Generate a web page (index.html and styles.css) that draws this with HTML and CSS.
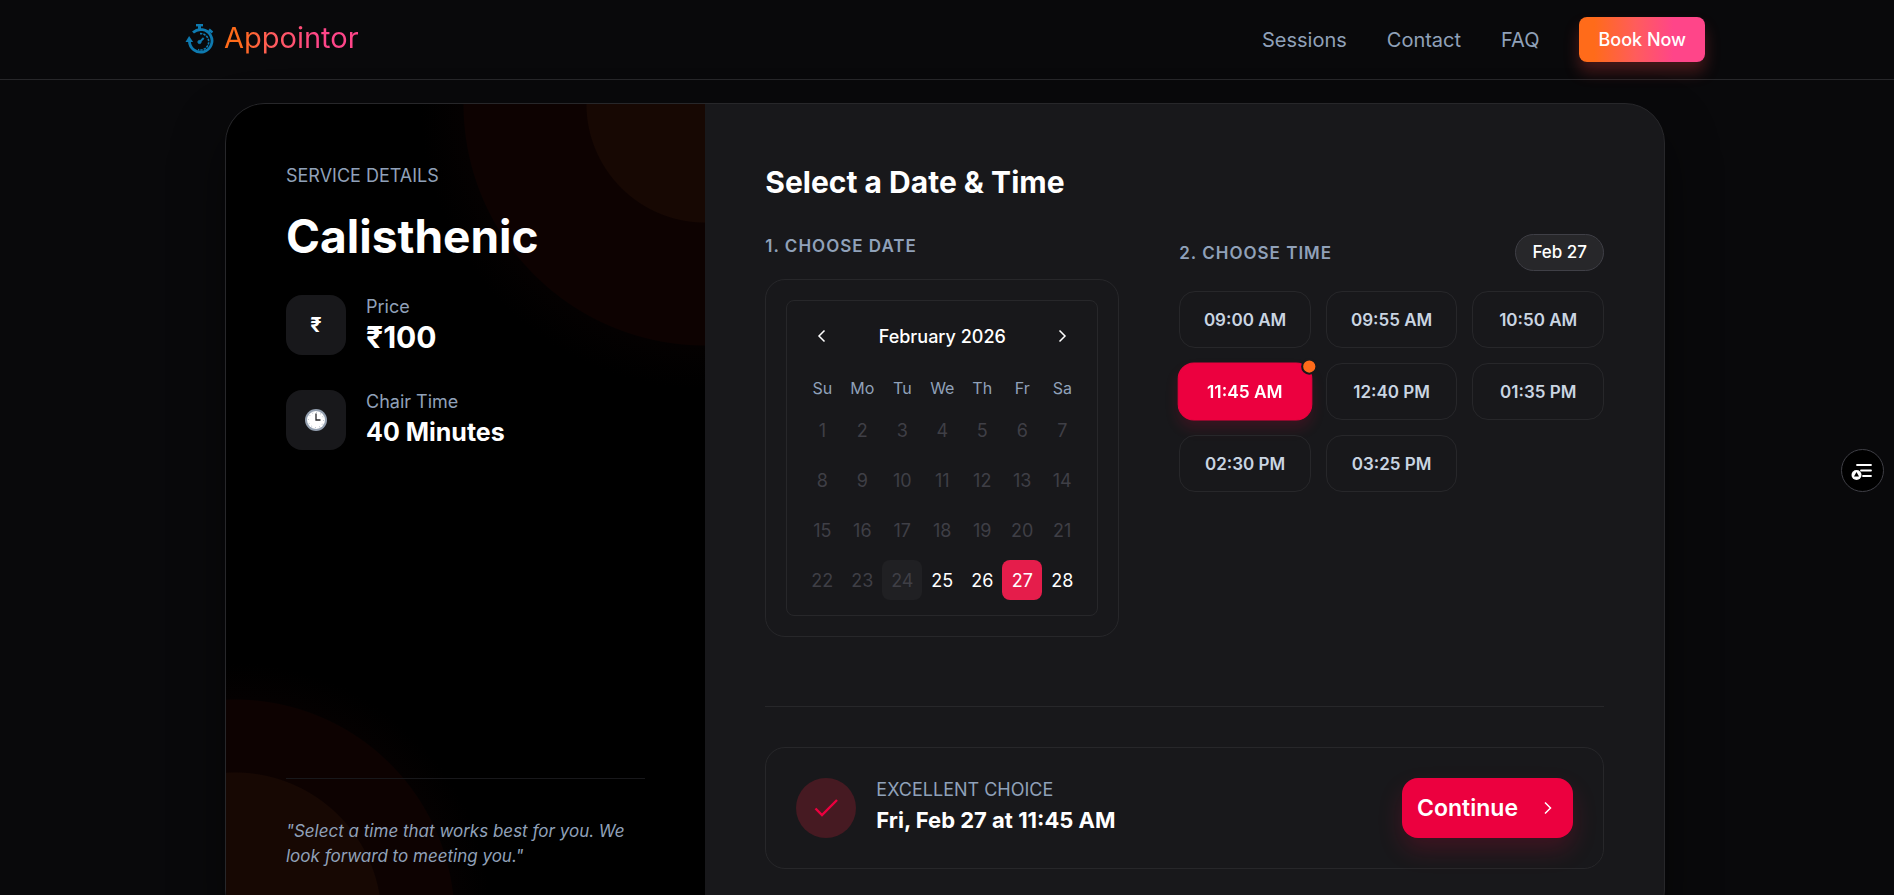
FILE: index.html
```html
<!DOCTYPE html>
<html lang="en">
<head>
    <meta charset="UTF-8">
    <meta name="viewport" content="width=device-width, initial-scale=1.0">
    <title>Appointor</title>
    <link rel="stylesheet" href="styles.css">
</head>
<body>
    <header class="header">
        <div class="header-inner">
            <a href="#" class="logo">
                <svg class="logo-icon" viewBox="0 0 28 31" fill="none" stroke="#0e7ab0">
                    <path d="M10.5 1.2h7" stroke-width="2.4"/>
                    <path d="M14 2v4" stroke-width="3"/>
                    <path d="M23.5 5.5l3.4 3" stroke-width="2.4"/>
                    <path d="M22.5 8.5l1.7-1.6" stroke-width="1.6"/>
                    <path d="M7.5 8.6A11.3 11.3 0 1 1 3.9 17" stroke-width="2.8"/>
                    <path d="M0 18l3.6-6 4 6z" fill="#0e7ab0" stroke="none"/>
                    <path d="M14.5 9.6a8.2 8.2 0 1 1-2 16" stroke-width="1.6" stroke-dasharray="2.4 1"/>
                    <path d="M13.8 18.4l4.4-4.4" stroke-width="2"/>
                    <circle cx="14" cy="18" r="1.6" fill="#0e7ab0"/>
                </svg>
                <span class="logo-text">Appointor</span>
            </a>
            <nav class="nav">
                <a href="#sessions">Sessions</a>
                <a href="#contact">Contact</a>
                <a href="#faq">FAQ</a>
                <button type="button" class="book-btn">Book Now</button>
            </nav>
        </div>
    </header>

    <main class="page">
        <div class="booking">
            <aside class="service">
                <div class="service-top">
                    <p class="label">SERVICE DETAILS</p>
                    <h1>Calisthenic</h1>
                    <div class="facts">
                        <div class="fact">
                            <div class="fact-icon">₹</div>
                            <div>
                                <p class="fact-label">Price</p>
                                <p class="fact-value price">₹100</p>
                            </div>
                        </div>
                        <div class="fact">
                            <div class="fact-icon">
                                <svg width="22" height="22" viewBox="0 0 22 22">
                                    <circle cx="11" cy="11" r="11" fill="#94a0b0"/>
                                    <circle cx="11" cy="11" r="9" fill="#fff"/>
                                    <circle cx="11" cy="11" r="7.6" fill="none" stroke="#9aa5b5" stroke-width="1" stroke-dasharray="0.8 3.18"/>
                                    <path d="M11 4.5V11h4.5" fill="none" stroke="#27272a" stroke-width="1.3"/>
                                </svg>
                            </div>
                            <div>
                                <p class="fact-label">Chair Time</p>
                                <p class="fact-value">40 Minutes</p>
                            </div>
                        </div>
                    </div>
                </div>
                <p class="quote">"Select a time that works best for you. We look forward to meeting you."</p>
            </aside>

            <section class="schedule">
                <h2>Select a Date &amp; Time</h2>
                <div class="pickers">
                    <div class="date-picker">
                        <h3>1. CHOOSE DATE</h3>
                        <div class="calendar-card">
                            <div class="calendar">
                                <div class="calendar-head">
                                    <button type="button" class="month-btn" aria-label="Previous month">
                                        <svg width="16" height="16" viewBox="0 0 16 16"><path d="M10.5 2.5L5 8l5.5 5.500"/></svg>
                                    </button>
                                    <span>February 2026</span>
                                    <button type="button" class="month-btn" aria-label="Next month">
                                        <svg width="16" height="16" viewBox="0 0 16 16"><path d="M5.500 2.500L11 8l-5.500 5.500"/></svg>
                                    </button>
                                </div>
                                <table>
                                    <thead>
                                        <tr><th>Su</th><th>Mo</th><th>Tu</th><th>We</th><th>Th</th><th>Fr</th><th>Sa</th></tr>
                                    </thead>
                                    <tbody>
                                        <tr>
                                            <td><button class="day" disabled>1</button></td>
                                            <td><button class="day" disabled>2</button></td>
                                            <td><button class="day" disabled>3</button></td>
                                            <td><button class="day" disabled>4</button></td>
                                            <td><button class="day" disabled>5</button></td>
                                            <td><button class="day" disabled>6</button></td>
                                            <td><button class="day" disabled>7</button></td>
                                        </tr>
                                        <tr>
                                            <td><button class="day" disabled>8</button></td>
                                            <td><button class="day" disabled>9</button></td>
                                            <td><button class="day" disabled>10</button></td>
                                            <td><button class="day" disabled>11</button></td>
                                            <td><button class="day" disabled>12</button></td>
                                            <td><button class="day" disabled>13</button></td>
                                            <td><button class="day" disabled>14</button></td>
                                        </tr>
                                        <tr>
                                            <td><button class="day" disabled>15</button></td>
                                            <td><button class="day" disabled>16</button></td>
                                            <td><button class="day" disabled>17</button></td>
                                            <td><button class="day" disabled>18</button></td>
                                            <td><button class="day" disabled>19</button></td>
                                            <td><button class="day" disabled>20</button></td>
                                            <td><button class="day" disabled>21</button></td>
                                        </tr>
                                        <tr>
                                            <td><button class="day" disabled>22</button></td>
                                            <td><button class="day" disabled>23</button></td>
                                            <td><button class="day today" disabled>24</button></td>
                                            <td><button class="day">25</button></td>
                                            <td><button class="day">26</button></td>
                                            <td><button class="day selected">27</button></td>
                                            <td><button class="day">28</button></td>
                                        </tr>
                                    </tbody>
                                </table>
                            </div>
                        </div>
                    </div>

                    <div class="time-picker">
                        <div class="time-head">
                            <h3>2. CHOOSE TIME</h3>
                            <span class="date-pill">Feb 27</span>
                        </div>
                        <div class="slots">
                            <button type="button" class="slot">09:00 AM</button>
                            <button type="button" class="slot">09:55 AM</button>
                            <button type="button" class="slot">10:50 AM</button>
                            <button type="button" class="slot selected">11:45 AM</button>
                            <button type="button" class="slot">12:40 PM</button>
                            <button type="button" class="slot">01:35 PM</button>
                            <button type="button" class="slot">02:30 PM</button>
                            <button type="button" class="slot">03:25 PM</button>
                        </div>
                    </div>
                </div>

                <div class="confirm">
                    <div class="summary">
                        <div class="check">
                            <svg width="28" height="28" viewBox="0 0 28 28"><path d="M3.500 14.500l6.500 6.500L25 6"/></svg>
                        </div>
                        <div class="summary-text">
                            <p class="label">EXCELLENT CHOICE</p>
                            <p class="chosen">Fri, Feb 27 at 11:45 AM</p>
                        </div>
                        <button type="button" class="continue-btn">
                            Continue
                            <svg width="20" height="20" viewBox="0 0 20 20"><path d="M7 4.500l5.500 5.500L7 15.500"/></svg>
                        </button>
                    </div>
                </div>
            </section>
        </div>
    </main>

    <button type="button" class="float-btn" aria-label="Open panel">
        <svg width="24" height="24" viewBox="0 0 24 24">
            <path d="M6 6h14M10 11.500h10M12 17h8" stroke="#fff" stroke-width="1.800" stroke-linecap="round"/>
            <circle cx="5.500" cy="16" r="5" fill="#fff"/>
            <path d="M5.500 13l2.500 4.500H3z" fill="#000"/>
        </svg>
    </button>
</body>
</html>
```
FILE: styles.css
```css
*,
*::after {
    box-sizing: border-box;
}

body {
    margin: 0;
    font-family: Inter, "Noto Sans", sans-serif;
    background-color: #09090b;
    color: #fff;
}

h1, h2, h3, p {
    margin: 0;
}

button {
    font-family: inherit;
    color: inherit;
    border: none;
    padding: 0;
    background: none;
    cursor: pointer;
}

svg {
    display: block;
}

/* header */
.header {
    border-bottom: 1px solid #27272a;
    padding-right: 4px;
}

.header-inner {
    max-width: 1536px;
    margin: 0 auto;
    padding: 17px 8px;
    display: flex;
    justify-content: space-between;
    align-items: center;
}

.logo {
    display: flex;
    align-items: center;
    gap: 10px;
    text-decoration: none;
}

.logo-icon {
    width: 29px;
    height: 31px;
}

.logo-text {
    padding-bottom: 4px;
    font-size: 29px;
    line-height: 36px;
    background: linear-gradient(90deg, #ff6b1a 12%, #ff5c5c 35%, #ff4589 70%);
    -webkit-background-clip: text;
    background-clip: text;
    color: transparent;
}

.nav {
    display: flex;
    align-items: center;
    gap: 40px;
}

.nav a {
    font-size: 20px;
    color: #90a1b9;
    text-decoration: none;
}

.book-btn {
    height: 45px;
    padding: 0 19px;
    border-radius: 8px;
    font-size: 18px;
    font-weight: 500;
    background: linear-gradient(90deg, #ff6b1a 12%, #ff5c5c 45%, #ff4589 75%);
    box-shadow: 0 10px 15px rgba(255, 70, 70, 0.25);
}

/* booking card */
.page {
    padding: 23px 4px 40px 0;
}

.booking {
    max-width: 1440px;
    margin: 0 auto;
    display: grid;
    grid-template-columns: 1fr 2fr;
    border: 1px solid #27272a;
    border-radius: 40px;
    overflow: hidden;
    background-color: #18181b;
    box-shadow: 0 25px 50px rgba(0, 0, 0, 0.5);
}

.service {
    padding: 60px;
    display: flex;
    flex-direction: column;
    justify-content: space-between;
    background:
        radial-gradient(circle at 100% 0, #170803 118px, #0d0201 119px, #0d0201 241px, #040101 242px, transparent 285px),
        radial-gradient(circle at 9px calc(100% - 10px), #170803 146px, #0d0201 147px, #0d0201 219px, #040101 220px, transparent 256px),
        #000;
}

.label {
    font-size: 18px;
    line-height: 24px;
    color: #90a1b9;
}

.service h1 {
    margin: 20px 0 30px;
    font-size: 46px;
    line-height: 57px;
    font-weight: 700;
}

.facts {
    display: flex;
    flex-direction: column;
    gap: 35px;
}

.fact {
    display: flex;
    align-items: center;
    gap: 20px;
}

.fact-icon {
    width: 60px;
    height: 60px;
    border-radius: 16px;
    display: flex;
    justify-content: center;
    align-items: center;
    font-size: 20px;
    font-weight: 700;
    background-color: #18181b;
}

.fact-label {
    font-size: 18px;
    line-height: 24px;
    color: #90a1b9;
}

.fact-value {
    font-size: 25px;
    line-height: 36px;
    font-weight: 700;
}

.fact-value.price {
    font-size: 30px;
}

.quote {
    padding-top: 40px;
    border-top: 1px solid #18181b;
    font-size: 17px;
    line-height: 25px;
    font-style: italic;
    color: #90a1b9;
}

/* date and time */
.schedule {
    padding: 60px;
}

h2 {
    margin-bottom: 34px;
    font-size: 30px;
    line-height: 36px;
    font-weight: 700;
}

h3 {
    font-size: 17px;
    line-height: 24px;
    font-weight: 600;
    letter-spacing: 1px;
    color: #90a1b9;
}

.pickers {
    display: grid;
    grid-template-columns: 5fr 6fr;
    gap: 60px;
    padding-bottom: 69px;
}

.calendar-card {
    margin-top: 21px;
    padding: 20px;
    border: 1px solid #27272a;
    border-radius: 20px;
}

.calendar {
    padding: 15px;
    border: 1px solid #27272a;
    border-radius: 8px;
}

.calendar-head {
    display: flex;
    justify-content: space-between;
    align-items: center;
    height: 40px;
    font-size: 18px;
    font-weight: 500;
}

.month-btn {
    width: 40px;
    height: 40px;
    display: flex;
    justify-content: center;
    align-items: center;
}

.month-btn svg,
.continue-btn svg {
    fill: none;
    stroke: #fff;
    stroke-width: 1.5;
}

table {
    width: 100%;
    margin-top: 20px;
    border-collapse: collapse;
    table-layout: fixed;
}

th {
    padding: 0;
    font-size: 16px;
    line-height: 24px;
    font-weight: 400;
    color: #90a1b9;
}

td {
    padding: 10px 0 0;
}

.day {
    display: block;
    width: 100%;
    height: 40px;
    border-radius: 8px;
    font-size: 18px;
}

.day:disabled {
    color: #3f3f46;
    cursor: default;
}

.day.today {
    background-color: #202023;
}

.day.selected {
    background-color: #e51d4b;
}

.time-head {
    display: flex;
    justify-content: space-between;
    align-items: center;
    margin-bottom: 20px;
}

.date-pill {
    padding: 0 16px;
    border: 1px solid #3f3f46;
    border-radius: 20px;
    font-size: 17px;
    line-height: 35px;
    font-weight: 500;
    background-color: #27272a;
}

.slots {
    display: grid;
    grid-template-columns: repeat(3, 1fr);
    gap: 15px;
}

.slot {
    position: relative;
    height: 57px;
    border: 1px solid #27272a;
    border-radius: 16px;
    font-size: 17px;
    font-weight: 600;
    color: #cad5e2;
}

.slot.selected {
    border-color: #ec003f;
    background-color: #ec003f;
    color: #fff;
    transform: scale(1.02);
    box-shadow: 0 8px 12px rgba(236, 0, 63, 0.15);
}

/* marker on the chosen slot */
.slot.selected::after {
    content: "";
    position: absolute;
    top: -5px;
    right: -6px;
    width: 16px;
    height: 16px;
    border: 2px solid #18181b;
    border-radius: 50%;
    background-color: #ff6b1a;
}

/* confirmation */
.confirm {
    padding-top: 40px;
    border-top: 1px solid #27272a;
}

.summary {
    display: flex;
    align-items: center;
    gap: 20px;
    padding: 30px;
    border: 1px solid #27272a;
    border-radius: 20px;
}

.check {
    width: 60px;
    height: 60px;
    border-radius: 50%;
    display: flex;
    justify-content: center;
    align-items: center;
    background-color: #461a22;
}

.check svg {
    fill: none;
    stroke: #ec003f;
    stroke-width: 2.4;
}

.summary-text {
    flex: 1;
}

.chosen {
    font-size: 22px;
    line-height: 36px;
    font-weight: 700;
}

.continue-btn {
    display: flex;
    align-items: center;
    gap: 20px;
    height: 60px;
    padding: 0 15px;
    border-radius: 16px;
    font-size: 23px;
    font-weight: 600;
    background-color: #ec003f;
    box-shadow: 0 12px 24px rgba(236, 0, 63, 0.18);
}

.float-btn {
    position: fixed;
    top: 449px;
    right: 10px;
    width: 43px;
    height: 43px;
    border: 1px solid #3f3f46;
    border-radius: 50%;
    display: flex;
    justify-content: center;
    align-items: center;
    background-color: #000;
}
```
